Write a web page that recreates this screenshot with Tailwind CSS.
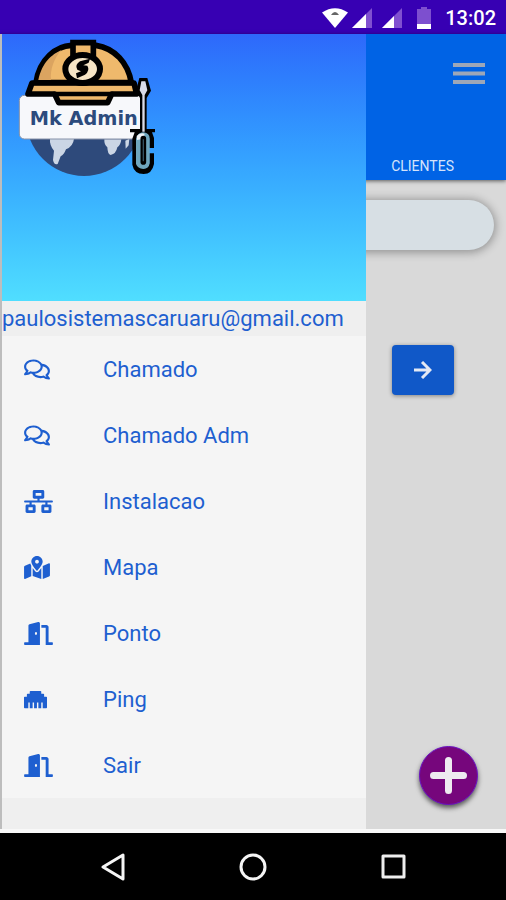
<!DOCTYPE html>
<html lang="pt-BR">
  <head>
    <meta charset="UTF-8" />
    <meta name="viewport" content="width=device-width, initial-scale=1.0" />
    <title>Mk Admin</title>
    <script src="https://cdn.jsdelivr.net/npm/@tailwindcss/browser@4"></script>
  </head>
  <body class="flex flex-col min-h-screen bg-[#d9d9d9] font-[Roboto,sans-serif]">
    <!-- Icons used more than once -->
    <svg class="hidden">
      <symbol id="comments" viewBox="0 0 576 512">
        <path d="M532 386.2c27.5-27.1 44-61.1 44-98.2 0-80-76.5-146.1-176.2-157.9C368.3 72.5 294.3 32 208 32 93.1 32 0 103.6 0 192c0 37 16.5 71 44 98.2-15.3 30.7-37.3 54.5-37.7 54.9-6.3 6.7-8.1 16.5-4.4 25 3.6 8.5 12 14 21.2 14 53.5 0 96.7-20.2 125.2-38.8 9.2 2.1 18.7 3.7 28.4 4.9C208.1 407.6 281.8 448 368 448c20.8 0 40.8-2.4 59.8-6.8C456.3 459.7 499.4 480 553 480c9.2 0 17.5-5.5 21.2-14 3.6-8.5 1.9-18.3-4.4-25-.4-.3-22.5-24.1-37.8-54.8zm-392.8-92.3L122.1 305c-14.1 9.1-28.5 16.3-43.1 21.4 2.7-4.7 5.4-9.7 8-14.8l15.5-31.1L77.7 256C64.2 242.6 48 220.7 48 192c0-60.7 73.3-112 160-112s160 51.3 160 112-73.3 112-160 112c-16.5 0-33-1.9-49-5.6l-19.8-4.5zM498.3 352l-24.7 24.4 15.5 31.1c2.6 5.1 5.3 10.1 8 14.8-14.6-5.1-29-12.3-43.1-21.4l-17.1-11.1-19.9 4.6c-16 3.7-32.5 5.6-49 5.6-54 0-102.2-20.1-131.3-49.7C338 339.5 416 272.9 416 192c0-3.4-.4-6.7-.7-10C479.7 196.5 528 238.8 528 288c0 28.7-16.2 50.6-29.7 64z" />
      </symbol>
      <symbol id="door" viewBox="0 0 640 512">
        <path d="M624 448h-80V113.45C544 86.19 522.47 64 496 64H384v64h96v384h144c8.84 0 16-7.16 16-16v-32c0-8.84-7.16-16-16-16zM312.24 1.01l-192 49.74C105.99 54.44 96 67.7 96 82.92V448H16c-8.84 0-16 7.16-16 16v32c0 8.84 7.16 16 16 16h336V33.18c0-21.58-19.56-37.41-39.76-32.17zM264 288c-13.25 0-24-14.33-24-32s10.75-32 24-32 24 14.33 24 32-10.75 32-24 32z" />
      </symbol>
    </svg>

    <!-- Status bar -->
    <div class="flex items-center justify-end h-[34px] pt-px pr-[10px] bg-[#3700b3] text-white">
      <svg class="w-[26px] h-5 mr-1" viewBox="0 0 26 20">
        <path d="M0 4.500Q13-4 26 4.500L13 20Z" fill="#fff" />
        <path d="M9 7q4-6 8 0Z" fill="#666" />
      </svg>
      <svg class="w-5 h-5 mr-[10px]" viewBox="0 0 20 20">
        <path d="M0 20L20 0V20Z" fill="#8050d0" />
        <path d="M0 20L14 6V20Z" fill="#fff" />
      </svg>
      <svg class="w-5 h-5 mr-[15px]" viewBox="0 0 20 20">
        <path d="M0 20L20 0V20Z" fill="#8050d0" />
        <path d="M0 20L12 8V20Z" fill="#fff" />
      </svg>
      <svg class="w-[14px] h-[22px] mr-[14px]" viewBox="0 0 14 22">
        <path d="M0 2H4V0h6V2h4V22H0Z" fill="#7d4fcf" />
        <path d="M0 17H14V22H0Z" fill="#fff" />
      </svg>
      <span class="text-[20px] leading-6 font-medium">13:02</span>
    </div>

    <div class="relative flex flex-col flex-1 border-b-4 border-[#f8f8f8]">
      <!-- Page behind the drawer -->
      <header class="flex flex-col justify-between items-end h-[146px] pt-[25px] pb-1 bg-[#0063e5] shadow-[0_1px_4px_rgba(0,0,0,0.6)]">
        <button aria-label="Menu" class="mr-[21px]">
          <svg class="w-8 h-[28px]" viewBox="0 0 32 28">
            <path d="M0 6H32M0 14.500H32M0 23H32" stroke="#9da7b8" stroke-width="4" />
          </svg>
        </button>
        <a href="#clientes" class="mr-[52px] text-[14px] leading-5 text-[#d5e3fb]">CLIENTES</a>
      </header>
      <main class="flex flex-col flex-1 items-end">
        <input type="text" aria-label="Buscar cliente" class="w-[calc(100%-24px)] h-[50px] mt-5 mr-3 px-6 rounded-full bg-[#d7dfe4] shadow-[0_1px_8px_2px_rgba(0,0,0,0.3)]" />
        <button aria-label="Avançar" class="flex items-center justify-center w-[62px] h-[50px] mt-[95px] mr-[52px] rounded bg-[#1058c8] shadow-[0_1px_4px_rgba(0,0,0,0.4)]">
          <svg class="w-[18px] h-[18px]" viewBox="0 0 18 18" fill="none" stroke="#e4e9f4" stroke-width="3">
            <path d="M0 9H16M8 1L16 9L8 17" />
          </svg>
        </button>
        <button aria-label="Adicionar" class="flex items-center justify-center w-[59px] h-[59px] mt-auto mb-6 mr-[28px] rounded-full border border-[#6a12c4] bg-[#76067c] shadow-[0_3px_5px_rgba(0,0,0,0.6)]">
          <svg class="w-[37px] h-[37px]" viewBox="0 0 37 37" stroke="#eeeaf0" stroke-width="7" stroke-linecap="round">
            <path d="M18.500 3.500V33.500M3.500 18.500H33.500" />
          </svg>
        </button>
      </main>

      <!-- Drawer -->
      <aside class="absolute inset-y-0 left-0 w-[366px] border-l-2 border-[#bdbdbd] bg-[#efefef] text-[#1e5fd0]">
        <div class="h-[267px] pt-1 pl-[14px] bg-linear-to-b from-[#2e68fb] to-[#50deff]">
          <svg class="w-[140px] h-[140px]" viewBox="48 24 420 420" role="img" aria-label="Mk Admin">
            <!-- globe -->
            <circle cx="252" cy="264" r="174" fill="#2e4a7b" />
            <path d="M150 326H222Q220 348 198 358Q192 374 182 379L173 402Q162 406 159 390L162 362Q148 345 150 326Z" fill="#cbd6e5" />
            <path d="M313 328H364Q362 346 352 352Q348 372 332 375Q323 374 322 352Q312 344 313 328ZM376 332L388 326L386 346L377 356Z" fill="#cbd6e5" />
            <!-- name plate -->
            <rect x="58" y="196" width="372" height="131" rx="15" fill="#f7f8fb" stroke="#8792a8" stroke-width="3" />
            <text x="89" y="286" font-family="DejaVu Sans, sans-serif" font-weight="700" font-size="58" fill="#2c4b7d">Mk Admin</text>
            <!-- helmet -->
            <path d="M108 158C118 86 170 48 214 46H288C344 55 384 98 394 158Z" fill="#efb96c" stroke="#000" stroke-width="17" />
            <path d="M115 150C127 96 155 74 184 60C162 86 150 118 153 150Z" fill="#dba460" />
            <path d="M96 159H402L410 192H335L323 218H176L164 192H84Z" fill="#efb96c" stroke="#000" stroke-width="17" stroke-linejoin="round" />
            <path d="M100 159H402M160 192H340" stroke="#000" stroke-width="14" />
            <path d="M219 38H280V84H219Z" fill="#efb96c" stroke="#000" stroke-width="17" />
            <ellipse cx="248" cy="117" rx="52" ry="42" fill="#f6e5c6" stroke="#000" stroke-width="18" />
            <path d="M270 86L240 94Q223 105 232 119L243 124L228 130L231 145L255 134Q271 121 262 107L250 106L266 98Z" fill="#000" />
            <!-- screwdriver -->
            <path d="M418 144H442L453 182L440 204V297H465V307H456L462 324V354H448V326Q446 312 431 312Q414 312 414 328V400Q416 415 431 415Q448 414 448 398V370H462V402Q456 432 431 432Q402 431 397 404V326L404 307H390V297H420V204L408 182Z" fill="#000" />
            <path d="M424 154H436L442 181L434 195V305H427V195L419 181Z" fill="#d9dbe8" />
            <path d="M412 318Q417 307 431 307Q449 309 449 326V400Q446 417 430 417Q413 416 408 402V326Z" fill="#6fa6bd" />
            <path d="M410 318Q420 306 434 311L430 326L411 330Z" fill="#eef2f6" />
            <path d="M430 326V396" stroke="#000" stroke-width="17" stroke-linecap="round" />
            <path d="M430 328V394" stroke="#34515f" stroke-width="4" />
          </svg>
        </div>
        <p class="h-[35px] text-[22px] leading-[35px] whitespace-nowrap">paulosistemascaruaru@gmail.com</p>
        <nav class="bg-[#f5f5f5] text-[22px] leading-8">
          <a href="#chamado" class="flex items-center h-[66px] pt-px pl-[22px]">
            <span class="w-[79px]"><svg class="w-[26px] h-[23px] fill-current"><use href="#comments" /></svg></span>
            Chamado
          </a>
          <a href="#chamado-adm" class="flex items-center h-[66px] pt-px pl-[22px]">
            <span class="w-[79px]"><svg class="w-[26px] h-[23px] fill-current"><use href="#comments" /></svg></span>
            Chamado Adm
          </a>
          <a href="#instalacao" class="flex items-center h-[66px] pt-px pl-[22px]">
            <span class="w-[79px]">
              <svg class="w-[29px] h-[23px] fill-current" viewBox="0 0 640 512">
                <path d="M640 264v-16c0-8.84-7.16-16-16-16H344v-40h72c17.67 0 32-14.33 32-32V32c0-17.67-14.33-32-32-32H224c-17.67 0-32 14.33-32 32v128c0 17.67 14.33 32 32 32h72v40H16c-8.84 0-16 7.16-16 16v16c0 8.84 7.16 16 16 16h104v40H64c-17.67 0-32 14.33-32 32v128c0 17.67 14.33 32 32 32h160c17.67 0 32-14.33 32-32V352c0-17.67-14.33-32-32-32h-56v-40h304v40h-56c-17.67 0-32 14.33-32 32v128c0 17.67 14.33 32 32 32h160c17.67 0 32-14.33 32-32V352c0-17.67-14.33-32-32-32h-56v-40h104c8.84 0 16-7.16 16-16zM256 128V64h128v64H256zm-64 320H96v-64h96v64zm352 0h-96v-64h96v64z" />
              </svg>
            </span>
            Instalacao
          </a>
          <a href="#mapa" class="flex items-center h-[66px] pt-px pl-[22px]">
            <span class="w-[79px]">
              <svg class="w-[26px] h-[23px] fill-current" viewBox="0 0 576 512">
                <path d="M288 0c-69.59 0-126 56.41-126 126 0 56.26 82.35 158.8 113.9 196.02 6.39 7.54 17.82 7.54 24.2 0C331.65 284.8 414 182.26 414 126 414 56.41 357.59 0 288 0zm0 168c-23.2 0-42-18.8-42-42s18.8-42 42-42 42 18.8 42 42-18.8 42-42 42zM20.12 215.95A32.006 32.006 0 0 0 0 245.66v250.32c0 11.32 11.43 19.06 21.94 14.86L160 448V214.92c-8.84-15.98-16.07-31.54-21.25-46.42L20.12 215.95zM288 359.67c-14.07 0-27.38-6.18-36.51-16.96-19.66-23.2-40.57-49.62-59.49-76.72v182l192 64V266c-18.92 27.09-39.82 53.52-59.49 76.72-9.13 10.77-22.44 16.95-36.51 16.95zm266.06-198.51L416 224v288l139.88-55.95A31.996 31.996 0 0 0 576 426.34V176.02c0-11.32-11.43-19.06-21.94-14.86z" />
              </svg>
            </span>
            Mapa
          </a>
          <a href="#ponto" class="flex items-center h-[66px] pt-px pl-[22px]">
            <span class="w-[79px]"><svg class="w-[29px] h-[23px] fill-current"><use href="#door" /></svg></span>
            Ponto
          </a>
          <a href="#ping" class="flex items-center h-[66px] pt-px pl-[22px]">
            <span class="w-[79px]">
              <svg class="w-[23px] h-[23px] fill-current" viewBox="0 0 512 512">
                <path d="M496 192h-48v-48c0-8.800-7.200-16-16-16h-48V80c0-8.800-7.200-16-16-16H144c-8.800 0-16 7.200-16 16v48H80c-8.800 0-16 7.200-16 16v48H16c-8.800 0-16 7.200-16 16v224c0 8.800 7.200 16 16 16h80V320h32v128h64V320h32v128h64V320h32v128h64V320h32v128h80c8.800 0 16-7.200 16-16V208c0-8.800-7.200-16-16-16z" />
              </svg>
            </span>
            Ping
          </a>
          <a href="#sair" class="flex items-center h-[66px] pt-px pl-[22px]">
            <span class="w-[79px]"><svg class="w-[29px] h-[23px] fill-current"><use href="#door" /></svg></span>
            Sair
          </a>
        </nav>
      </aside>
    </div>

    <!-- Android navigation -->
    <footer class="flex items-center justify-center gap-[112px] h-[67px] bg-black">
      <button aria-label="Voltar">
        <svg class="w-7 h-7" viewBox="0 0 28 28" fill="none" stroke="#f5f5f5" stroke-width="3" stroke-linejoin="round">
          <path d="M24 2V26L4 14Z" />
        </svg>
      </button>
      <button aria-label="Início">
        <svg class="w-7 h-7" viewBox="0 0 28 28" fill="none" stroke="#f5f5f5" stroke-width="3">
          <circle cx="14" cy="14" r="12" />
        </svg>
      </button>
      <button aria-label="Recentes">
        <svg class="w-7 h-7" viewBox="0 0 28 28" fill="none" stroke="#eee" stroke-width="3" stroke-linejoin="round">
          <path d="M4 3H25V24H4Z" />
        </svg>
      </button>
    </footer>
  </body>
</html>
